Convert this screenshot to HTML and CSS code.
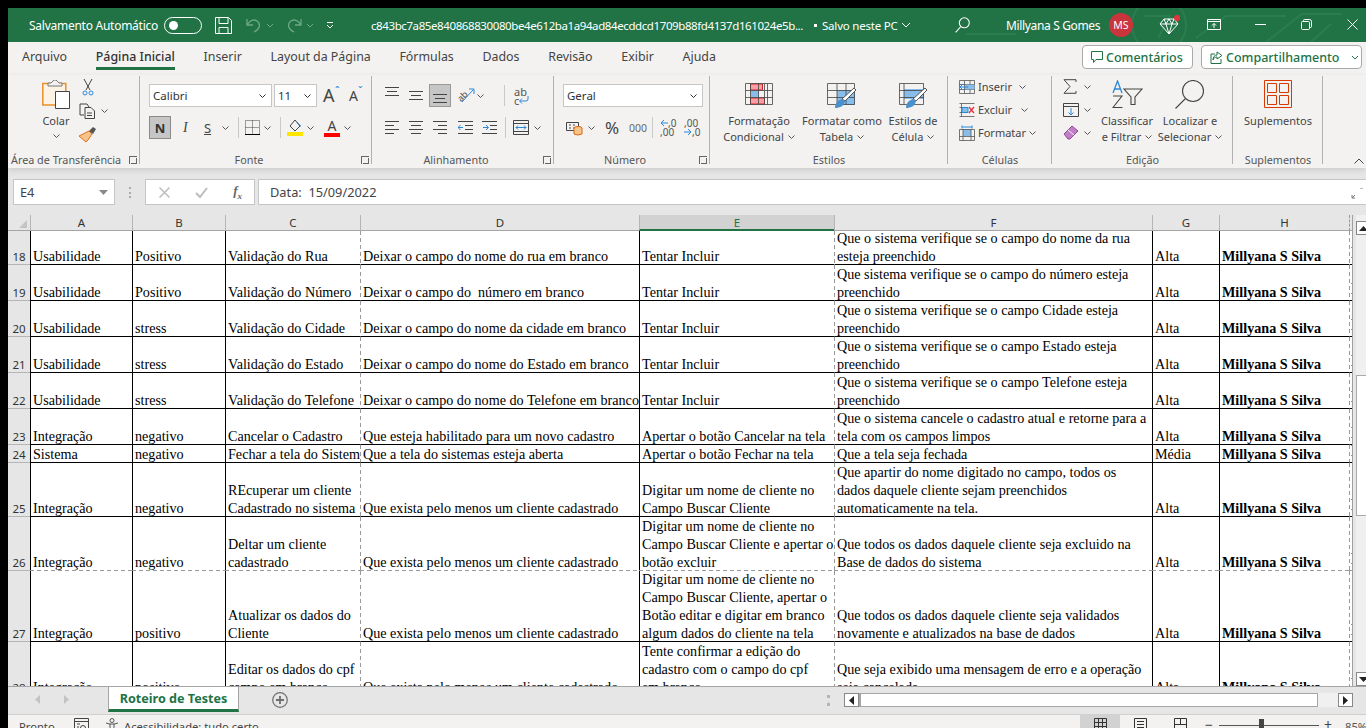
FILE: index.html
```html
<!DOCTYPE html>
<html lang="pt-BR">
<head>
<meta charset="utf-8">
<title>Roteiro de Testes</title>
<link rel="stylesheet" href="styles.css">
</head>
<body>
<div class="app">
  <header class="titlebar">
    <svg class="circuit" width="400" height="34" viewBox="0 0 400 34" fill="none" stroke="#2c7c51" stroke-width="2"><circle cx="193" cy="17" r="27"/><path d="M178 8h26l-12 22M60 20h60l10-8M0 26h50M230 30l30-22h60M300 34l36-28h40M345 34l20-18"/></svg>
    <span class="tt-auto">Salvamento Automático</span>
    <span class="toggle"><i></i></span>
    <svg class="tt-save" width="17" height="17" viewBox="0 0 17 17" fill="none" stroke="#fff"><path d="M.5.5h13l3 3v13H.5zM4 .5v6h9v-6M4 16.5v-6h9v6"/></svg>
    <svg class="tt-undo" width="16" height="16" viewBox="0 0 16 16" fill="none" stroke="#6ba888" stroke-width="1.3"><path d="M1 2v6h6M1 8c3-5 7-6 10-4 4 3 3 8-3 11"/></svg>
    <svg class="chev-dim" width="8" height="5" viewBox="0 0 8 5" fill="none" stroke="#6ba888"><path d="M1 1l3 3 3-3"/></svg>
    <svg class="tt-redo" width="16" height="16" viewBox="0 0 16 16" fill="none" stroke="#6ba888" stroke-width="1.3"><path d="M15 2v6H9M15 8C12 3 8 2 5 4c-4 3-3 8 3 11"/></svg>
    <svg class="chev-dim" width="8" height="5" viewBox="0 0 8 5" fill="none" stroke="#6ba888"><path d="M1 1l3 3 3-3"/></svg>
    <svg class="tt-cust" width="8" height="7" viewBox="0 0 8 7" fill="none" stroke="#fff"><path d="M1 .5h6M1 3l3 3 3-3"/></svg>
    <span class="tt-file">c843bc7a85e840868830080be4e612ba1a94ad84ecddcd1709b88fd4137d161024e5b...</span>
    <span class="tt-dot"></span>
    <span class="tt-saved">Salvo neste PC</span>
    <svg class="tt-chev" width="10" height="6" viewBox="0 0 10 6" fill="none" stroke="#fff"><path d="M1 1l4 4 4-4"/></svg>
    <svg class="tt-search" width="15" height="16" viewBox="0 0 15 16" fill="none" stroke="#fff" stroke-width="1.1"><circle cx="9.3" cy="5.8" r="5"/><path d="M5.8 9.5L.7 15.3"/></svg>
    <span class="tt-user">Millyana S Gomes</span>
    <span class="avatar">MS</span>
    <svg class="tt-gem" width="22" height="20" viewBox="0 0 22 20" fill="none"><path d="M5 4h10l4 5-9 10L1 9zM1 9h18M7 9l3 10 3-10-3-5zM5 4l2 5M15 4l-2 5" stroke="#fff"/><circle cx="18" cy="3" r="3" fill="#e3343e"/></svg>
    <svg class="tt-disp" width="14" height="11" viewBox="0 0 14 11" fill="none" stroke="#fff"><path d="M.5.5h13v10H.5zM.5 2.5h13M7 9V4.5M5 6.5l2-2 2 2"/></svg>
    <svg class="tt-min" width="11" height="1" viewBox="0 0 11 1"><path d="M0 .5h11" stroke="#fff"/></svg>
    <svg class="tt-max" width="11" height="11" viewBox="0 0 11 11" fill="none" stroke="#fff"><rect x=".5" y="2.5" width="8" height="8" rx="1"/><path d="M2.5 2.5V1.5q0-1 1-1h5q2 0 2 2v5q0 1-1 1h-1"/></svg>
    <svg class="tt-close" width="11" height="11" viewBox="0 0 11 11" fill="none" stroke="#fff"><path d="M.5.5l10 10M10.500.5l-10 10"/></svg>
  </header>

  <nav class="tabs">
    <span class="tab">Arquivo</span>
    <span class="tab on">Página Inicial</span>
    <span class="tab">Inserir</span>
    <span class="tab">Layout da Página</span>
    <span class="tab">Fórmulas</span>
    <span class="tab">Dados</span>
    <span class="tab">Revisão</span>
    <span class="tab">Exibir</span>
    <span class="tab">Ajuda</span>
    <span class="grow"></span>
    <button class="pill pill-c"><svg width="12" height="13" viewBox="0 0 12 13" fill="none" stroke="#217346"><path d="M.5.5h11v8H5L2.5 11.5v-3h-2z"/></svg>Comentários</button>
    <button class="pill pill-s"><svg width="13" height="13" viewBox="0 0 13 13" fill="none" stroke="#217346"><path d="M5 3H1v9.500h10V8M7 1l5 3.500L7 8V6C5 6 3.500 7 3 9c0-3 1.500-5 4-5z"/></svg>Compartilhamento<svg class="pill-chev" width="8" height="5" viewBox="0 0 8 5" fill="none" stroke="#217346"><path d="M1 1l3 3 3-3"/></svg></button>
  </nav>

  <section class="ribbon">
    <div class="grp g-clip">
      <div class="gbody">
        <div class="paste">
          <svg width="28" height="31" viewBox="0 0 28 31" fill="none"><path d="M.8 3.500h23V25H.8z" fill="#fdf3e4" stroke="#e8912d" stroke-width="1.500"/><path d="M6 3h3l3-3h2l3 3h3v3H6z" fill="#f3f2f1" stroke="#777"/><path d="M13.500 11.500h14v17h-14z" fill="#fff" stroke="#444"/></svg>
          <span>Colar</span>
          <svg class="chev" width="7" height="4" viewBox="0 0 7 4" fill="none" stroke="#555"><path d="M.5.5l3 3 3-3"/></svg>
        </div>
        <div class="clip-side">
          <svg class="ic-scis" width="12" height="17" viewBox="0 0 12 17" fill="none" stroke="#444"><path d="M2 0l6 11M10 0L4 11"/><circle cx="3" cy="14" r="2" stroke="#2b88d8"/><circle cx="9" cy="14" r="2" stroke="#2b88d8"/></svg>
          <div class="rowi"><svg width="17" height="16" viewBox="0 0 17 16" fill="none" stroke="#444"><path d="M5 12H1V1h7l2 3M6 4.500h6l3.500 3.500v7.500H6zM8 10h5M8 12.500h5"/></svg><svg class="chev" width="7" height="4" viewBox="0 0 7 4" fill="none" stroke="#555"><path d="M.5.5l3 3 3-3"/></svg></div>
          <svg class="ic-paint" width="17" height="16" viewBox="0 0 17 16"><path d="M10 4l3 3-4 6-2 2-7-6 2-1z" fill="#f6c38a" stroke="#e0701a"/><path d="M10 4l4-4 3 2-3 5z" fill="#555"/></svg>
        </div>
      </div>
      <div class="glabel">Área de Transferência<i class="launch"></i></div>
    </div>

    <div class="grp g-font">
      <div class="gbody col">
        <div class="row r1">
          <span class="combo c-font">Calibri<svg width="7" height="4" viewBox="0 0 7 4" fill="none" stroke="#333"><path d="M.5.500l3 3 3-3"/></svg></span>
          <span class="combo c-size">11<svg width="7" height="4" viewBox="0 0 7 4" fill="none" stroke="#333"><path d="M.5.500l3 3 3-3"/></svg></span>
          <span class="bigA">A<sup>ˆ</sup></span>
          <span class="smallA">A<sup>ˇ</sup></span>
        </div>
        <div class="row r2">
          <span class="fbtn sel">N</span>
          <span class="fi">I</span>
          <span class="fs">S</span>
          <svg class="chev" width="7" height="4" viewBox="0 0 7 4" fill="none" stroke="#555"><path d="M.5.5l3 3 3-3"/></svg>
          <i class="vsep"></i>
          <svg class="ic-border" width="15" height="15" viewBox="0 0 15 15" fill="none" stroke="#444" stroke-dasharray="1 1"><path d="M.5.500h14v14H.500zM7.500.500v14M.5 7.500h14"/><path d="M0 14.500h15" stroke-dasharray="none" stroke="#000"/></svg>
          <svg class="chev" width="7" height="4" viewBox="0 0 7 4" fill="none" stroke="#555"><path d="M.5.5l3 3 3-3"/></svg>
          <i class="vsep"></i>
          <svg width="16" height="16" viewBox="0 0 16 16"><path d="M8 0l5 6-5 5-5-5z" fill="none" stroke="#444"/><path d="M9 1l5 5-1 1z" fill="#1f6fb5"/><rect y="12" width="16" height="4" fill="#ffe600"/></svg>
          <svg class="chev" width="7" height="4" viewBox="0 0 7 4" fill="none" stroke="#555"><path d="M.5.5l3 3 3-3"/></svg>
          <span class="colorA">A</span>
          <svg class="chev" width="7" height="4" viewBox="0 0 7 4" fill="none" stroke="#555"><path d="M.5.5l3 3 3-3"/></svg>
        </div>
      </div>
      <div class="glabel">Fonte<i class="launch"></i></div>
    </div>

    <div class="grp g-align">
      <div class="gbody col">
        <div class="row ra1">
          <svg class="al al-t" width="14" height="10" viewBox="0 0 14 10" stroke="#444"><path d="M0 .5h14M2 4.500h10M0 8.500h14"/></svg>
          <svg class="al" width="14" height="10" viewBox="0 0 14 10" stroke="#444"><path d="M0 .5h14M2 4.500h10M0 8.500h14"/></svg>
          <span class="alsel"><svg width="14" height="10" viewBox="0 0 14 10" stroke="#444"><path d="M0 .5h14M2 4.500h10M0 8.500h14"/></svg></span>
          <svg class="orient" width="18" height="17" viewBox="0 0 18 17" fill="none"><text x="0" y="12" font-size="9" fill="#444" font-family="Noto Sans" transform="rotate(-45 6 9)">ab</text><path d="M5 15L16 3M12 2h5v5" stroke="#2b88d8"/></svg>
          <svg class="chev" width="7" height="4" viewBox="0 0 7 4" fill="none" stroke="#555"><path d="M.5.5l3 3 3-3"/></svg>
          <i class="vsep s2"></i>
          <span class="wrap"><b>ab</b><b>c<svg width="10" height="8" viewBox="0 0 10 8" fill="none" stroke="#2b88d8"><path d="M9 0v3q0 2-2 2H1M3 2.500L.5 5 3 7.500"/></svg></b></span>
        </div>
        <div class="row ra2">
          <svg class="al" width="14" height="13" viewBox="0 0 14 13" stroke="#444"><path d="M0 .5h14M0 4.500h9M0 8.500h14M0 12.500h9"/></svg>
          <svg class="al" width="14" height="13" viewBox="0 0 14 13" stroke="#444"><path d="M0 .5h14M2 4.500h10M0 8.500h14M2 12.500h10"/></svg>
          <svg class="al" width="14" height="13" viewBox="0 0 14 13" stroke="#444"><path d="M0 .5h14M5 4.500h9M0 8.500h14M5 12.500h9"/></svg>
          <svg class="ind" width="15" height="13" viewBox="0 0 15 13" fill="none"><path d="M0 .5h15M7 4.500h8M7 8.500h8M0 12.500h15" stroke="#444"/><path d="M5 6.500H0M2.500 4L0 6.500 2.500 9" stroke="#2b88d8"/></svg>
          <svg class="ind" width="15" height="13" viewBox="0 0 15 13" fill="none"><path d="M0 .5h15M8 4.500h7M8 8.500h7M0 12.500h15" stroke="#444"/><path d="M1 6.500h5M4 4l2.500 2.500L4 9" stroke="#2b88d8"/></svg>
          <i class="vsep s3"></i>
          <svg width="16" height="15" viewBox="0 0 16 15" fill="none"><path d="M.5.500h15v14H.500zM.5 3.500h15M.5 11.500h15" stroke="#444"/><path d="M3 7.500h10M5 5.500l-2 2 2 2M11 5.500l2 2-2 2" stroke="#2b88d8"/></svg>
          <svg class="chev" width="7" height="4" viewBox="0 0 7 4" fill="none" stroke="#555"><path d="M.5.5l3 3 3-3"/></svg>
        </div>
      </div>
      <div class="glabel">Alinhamento<i class="launch"></i></div>
    </div>

    <div class="grp g-num">
      <div class="gbody col">
        <div class="row r1">
          <span class="combo c-num">Geral<svg width="7" height="4" viewBox="0 0 7 4" fill="none" stroke="#333"><path d="M.5.500l3 3 3-3"/></svg></span>
        </div>
        <div class="row rn2">
          <svg width="17" height="16" viewBox="0 0 17 16" fill="none"><path d="M.5 2.500h12v8H.5z" stroke="#444"/><path d="M3 5h2M3 8h2M7 5h2M7 8h2" stroke="#444"/><ellipse cx="12" cy="8" rx="4" ry="1.500" fill="#f6c38a" stroke="#d9660f"/><path d="M8 8v6q4 2 8 0V8" fill="#f6c38a" stroke="#d9660f"/></svg>
          <svg class="chev" width="7" height="4" viewBox="0 0 7 4" fill="none" stroke="#555"><path d="M.5.5l3 3 3-3"/></svg>
          <span class="pct">%</span>
          <span class="kilo">000</span>
          <i class="vsep s4"></i>
          <span class="dec"><svg width="8" height="8" viewBox="0 0 8 8" fill="none" stroke="#2b88d8"><path d="M8 4H1M4 1L1 4l3 3"/></svg><em>,0</em><br><em>,00</em></span>
          <span class="dec d2"><em>,00</em><br><svg width="8" height="8" viewBox="0 0 8 8" fill="none" stroke="#2b88d8"><path d="M0 4h7M4 1l3 3-3 3"/></svg><em>,0</em></span>
        </div>
      </div>
      <div class="glabel">Número<i class="launch"></i></div>
    </div>

    <div class="grp g-styles">
      <div class="gbody">
        <div class="big b-cond">
          <svg class="t8" width="28" height="22" viewBox="0 0 28 22" fill="none"><path d="M5.500 1h12v6h-12zM5.500 15h14v6h-14z" fill="#fa9ea3" stroke="#d3232a"/><path d="M5.500 8h8v6h-8z" fill="#87bde8"/><path d="M.5.500h27v21H.500zM.5 7.500h27M.5 14.500h27M5.500.5v21M13.500.500v21M19.500.500v21M22.500.500v21" stroke="#444" stroke-width=".8"/></svg>
          <span>Formatação<br>Condicional<svg class="chev" width="7" height="4" viewBox="0 0 7 4" fill="none" stroke="#555"><path d="M.5.5l3 3 3-3"/></svg></span>
        </div>
        <div class="big b-table">
          <svg class="t8" width="30" height="26" viewBox="0 0 30 26" fill="none"><path d="M10 7h18v15H10z" fill="#87bde8"/><path d="M.5.500h27v21H.500zM.5 7.500h27M.5 14.500h27M10 .5v21M19 .500v21" stroke="#444" stroke-width=".8"/><path d="M29 7L18 18l-3-2L27 5z" fill="#fff" stroke="#555"/><path d="M8 25c0-5 3-8 7-9l3 2c-1 5-5 7-10 7z" fill="#4a90cc"/></svg>
          <span>Formatar como<br>Tabela<svg class="chev" width="7" height="4" viewBox="0 0 7 4" fill="none" stroke="#555"><path d="M.5.5l3 3 3-3"/></svg></span>
        </div>
        <div class="big b-cell">
          <svg class="t8" width="29" height="26" viewBox="0 0 29 26" fill="none"><path d="M5 6h20v10H5z" fill="#87bde8"/><path d="M.5.500h24v21H.500zM.5 7.500h24M.5 14.500h24M5 .5v21" stroke="#444" stroke-width=".8"/><path d="M28 7L17 18l-3-2L26 5z" fill="#fff" stroke="#555"/><path d="M7 25c0-5 3-8 7-9l3 2c-1 5-5 7-10 7z" fill="#4a90cc"/></svg>
          <span>Estilos de<br>Célula<svg class="chev" width="7" height="4" viewBox="0 0 7 4" fill="none" stroke="#555"><path d="M.5.5l3 3 3-3"/></svg></span>
        </div>
      </div>
      <div class="glabel">Estilos</div>
    </div>

    <div class="grp g-cells">
      <div class="gbody col">
        <div class="cellrow"><svg width="16" height="14" viewBox="0 0 16 14" fill="none"><path d="M.5.500h15v13H.500zM.5 4.500h15M.5 9.500h15M5.500.500v13M11 .500v13" stroke="#555" stroke-width=".8"/><path d="M6 4.500h9.500v5H6z" fill="#87bde8"/><path d="M9 7H1M4 4L1 7l3 3" stroke="#2b88d8"/></svg><span>Inserir</span><svg class="chev c1" width="7" height="4" viewBox="0 0 7 4" fill="none" stroke="#555"><path d="M.5.5l3 3 3-3"/></svg></div>
        <div class="cellrow"><svg width="16" height="14" viewBox="0 0 16 14" fill="none"><path d="M.5.500h15M.5 13.500h15M2.500.5v13M.5 4.500h3M.5 9.500h3" stroke="#555" stroke-width=".8"/><path d="M3 4.500h6v5H3z" fill="#87bde8" stroke="#2b88d8"/><path d="M10 4l5 6M15 4l-5 6" stroke="#e3343e" stroke-width="1.300"/></svg><span>Excluir</span><svg class="chev c2" width="7" height="4" viewBox="0 0 7 4" fill="none" stroke="#555"><path d="M.5.5l3 3 3-3"/></svg></div>
        <div class="cellrow"><svg width="16" height="16" viewBox="0 0 16 16" fill="none"><path d="M4 4h8v7H4z" fill="#87bde8"/><path d="M.5 4.500h15v11H.500zM.5 11.500h15M4 4.500v11M12 4.500v11" stroke="#555" stroke-width=".8"/><path d="M3 .5v3M13 .5v3M3 2h10" stroke="#2b88d8"/></svg><span>Formatar</span><svg class="chev c3" width="7" height="4" viewBox="0 0 7 4" fill="none" stroke="#555"><path d="M.5.5l3 3 3-3"/></svg></div>
      </div>
      <div class="glabel">Células</div>
    </div>

    <div class="grp g-edit">
      <div class="gbody">
        <div class="edcol">
          <div class="edrow"><svg width="14" height="15" viewBox="0 0 14 15" fill="none" stroke="#444"><path d="M13 3V.7H1l6 6.800-6 6.800h12V12"/></svg><svg class="chev" width="7" height="4" viewBox="0 0 7 4" fill="none" stroke="#555"><path d="M.5.5l3 3 3-3"/></svg></div>
          <div class="edrow"><svg width="16" height="14" viewBox="0 0 16 14" fill="none"><path d="M.5.500h15v13H.500zM.5 3.500h15" stroke="#444"/><path d="M8 5v7M5.500 9.500L8 12l2.500-2.500" stroke="#2b88d8"/></svg><svg class="chev" width="7" height="4" viewBox="0 0 7 4" fill="none" stroke="#555"><path d="M.5.5l3 3 3-3"/></svg></div>
          <div class="edrow"><svg width="16" height="15" viewBox="0 0 16 15"><path d="M1 9l8-8 6 5-8 8H5z" fill="#c27dc7" stroke="#93489a"/><path d="M5 5l6 5" stroke="#f3f2f1"/></svg><svg class="chev" width="7" height="4" viewBox="0 0 7 4" fill="none" stroke="#555"><path d="M.5.5l3 3 3-3"/></svg></div>
        </div>
        <div class="big b-sort">
          <svg class="t5" width="31" height="29" viewBox="0 0 31 29" fill="none"><path d="M1 13L5.500 1 10 13M2.500 9h6" stroke="#2b88d8" stroke-width="1.300"/><path d="M1 16h9L1 27.500h9.500" stroke="#444" stroke-width="1.100"/><path d="M12 9h18l-7 8v7.500h-4V17z" stroke="#444" stroke-width="1.100"/></svg>
          <span>Classificar<br>e Filtrar<svg class="chev" width="7" height="4" viewBox="0 0 7 4" fill="none" stroke="#555"><path d="M.5.5l3 3 3-3"/></svg></span>
        </div>
        <div class="big b-find">
          <svg class="t5" width="30" height="29" viewBox="0 0 30 29" fill="none" stroke="#444" stroke-width="1.100"><circle cx="18" cy="11" r="10.500"/><path d="M10.500 18.500L.5 28.500"/></svg>
          <span>Localizar e<br>Selecionar<svg class="chev" width="7" height="4" viewBox="0 0 7 4" fill="none" stroke="#555"><path d="M.5.5l3 3 3-3"/></svg></span>
        </div>
      </div>
      <div class="glabel">Edição</div>
    </div>

    <div class="grp g-addin">
      <div class="gbody">
        <div class="big b-add">
          <svg class="t5" width="28" height="28" viewBox="0 0 28 28" fill="none" stroke="#d83b01"><path d="M.5.500h27v27H.500zM3.500 3.500h9v9h-9zM15.500 3.500h9v9h-9zM3.500 15.500h9v9h-9zM15.500 15.500h9v9h-9z"/></svg>
          <span>Suplementos</span>
        </div>
      </div>
      <div class="glabel">Suplementos</div>
    </div>
    <svg class="collapse" width="10" height="6" viewBox="0 0 10 6" fill="none" stroke="#444"><path d="M.5 5.500L5 1l4.500 4.500"/></svg>
  </section>

  <div class="fxbar">
    <div class="namebox">E4<svg width="9" height="5" viewBox="0 0 9 5"><path d="M0 0h9L4.500 5z" fill="#8a8a8a"/></svg></div>
    <span class="fxdots"></span>
    <div class="fxbtns">
      <svg width="11" height="11" viewBox="0 0 11 11" stroke="#bdbdbd" stroke-width="1.500"><path d="M.5.500l10 10M10.500.500l-10 10"/></svg>
      <svg width="13" height="11" viewBox="0 0 13 11" fill="none" stroke="#bdbdbd" stroke-width="2"><path d="M1 6l4 4 7-9"/></svg>
      <span class="fx">f<sub>x</sub></span>
    </div>
    <div class="fxinput">Data:&nbsp; 15/09/2022<svg class="fxexp" width="12" height="11" viewBox="0 0 12 11" fill="none" stroke="#777"><path d="M1 10l3-3M1 7v3h3"/><path d="M9 0h2v2" stroke-dasharray="1 1"/></svg></div>
  </div>

  <div class="sheet">
    <div class="gridwrap">
      <div class="grid">
        <div class="hd corner"><i></i></div><div class="hd">A</div><div class="hd">B</div><div class="hd">C</div><div class="hd">D</div><div class="hd cur">E</div><div class="hd">F</div><div class="hd">G</div><div class="hd">H</div><div class="hd sl"></div>

        <div class="rh"><span>18</span></div><div class="c"><span>Usabilidade</span></div><div class="c"><span>Positivo</span></div><div class="c"><span>Validação do Rua</span></div><div class="c da"><span>Deixar o campo do nome do rua em branco</span></div><div class="c"><span>Tentar Incluir</span></div><div class="c da"><span>Que o sistema verifique se o campo do nome da rua esteja preenchido</span></div><div class="c"><span>Alta</span></div><div class="c nm"><span>Millyana S Silva</span></div><div class="c sl"></div>

        <div class="rh"><span>19</span></div><div class="c"><span>Usabilidade</span></div><div class="c"><span>Positivo</span></div><div class="c"><span>Validação do Número</span></div><div class="c da"><span>Deixar o campo do&nbsp; número em branco</span></div><div class="c"><span>Tentar Incluir</span></div><div class="c da"><span>Que sistema verifique se o campo do número esteja preenchido</span></div><div class="c"><span>Alta</span></div><div class="c nm"><span>Millyana S Silva</span></div><div class="c sl"></div>

        <div class="rh"><span>20</span></div><div class="c"><span>Usabilidade</span></div><div class="c"><span>stress</span></div><div class="c"><span>Validação do Cidade</span></div><div class="c da"><span>Deixar o campo do nome da cidade em branco</span></div><div class="c"><span>Tentar Incluir</span></div><div class="c da"><span>Que o sistema verifique se o campo Cidade esteja preenchido</span></div><div class="c"><span>Alta</span></div><div class="c nm"><span>Millyana S Silva</span></div><div class="c sl"></div>

        <div class="rh"><span>21</span></div><div class="c"><span>Usabilidade</span></div><div class="c"><span>stress</span></div><div class="c"><span>Validação do Estado</span></div><div class="c da"><span>Deixar o campo do nome do Estado em branco</span></div><div class="c"><span>Tentar Incluir</span></div><div class="c da"><span>Que o sistema verifique se o campo Estado esteja preenchido</span></div><div class="c"><span>Alta</span></div><div class="c nm"><span>Millyana S Silva</span></div><div class="c sl"></div>

        <div class="rh"><span>22</span></div><div class="c"><span>Usabilidade</span></div><div class="c"><span>stress</span></div><div class="c"><span>Validação do Telefone</span></div><div class="c da clip"><span>Deixar o campo do nome do Telefone em branco</span></div><div class="c"><span>Tentar Incluir</span></div><div class="c da"><span>Que o sistema verifique se o campo Telefone esteja preenchido</span></div><div class="c"><span>Alta</span></div><div class="c nm"><span>Millyana S Silva</span></div><div class="c sl"></div>

        <div class="rh"><span>23</span></div><div class="c"><span>Integração</span></div><div class="c"><span>negativo</span></div><div class="c"><span>Cancelar o Cadastro</span></div><div class="c da"><span>Que esteja habilitado para um novo cadastro</span></div><div class="c"><span>Apertar o botão Cancelar na tela</span></div><div class="c da"><span>Que o sistema cancele o cadastro atual e retorne para a tela com os campos limpos</span></div><div class="c"><span>Alta</span></div><div class="c nm"><span>Millyana S Silva</span></div><div class="c sl"></div>

        <div class="rh"><span>24</span></div><div class="c"><span>Sistema</span></div><div class="c"><span>negativo</span></div><div class="c clip"><span>Fechar a tela do Sistema</span></div><div class="c da"><span>Que a tela do sistemas esteja aberta</span></div><div class="c"><span>Apertar o botão Fechar na tela</span></div><div class="c da"><span>Que a tela seja fechada</span></div><div class="c"><span>Média</span></div><div class="c nm"><span>Millyana S Silva</span></div><div class="c sl"></div>

        <div class="rh"><span>25</span></div><div class="c"><span>Integração</span></div><div class="c"><span>negativo</span></div><div class="c"><span>REcuperar um cliente Cadastrado no sistema</span></div><div class="c da"><span>Que exista pelo menos um cliente cadastrado</span></div><div class="c"><span>Digitar um nome de cliente no Campo Buscar Cliente</span></div><div class="c da"><span>Que apartir do nome digitado no campo, todos os dados daquele cliente sejam preenchidos automaticamente na tela.</span></div><div class="c"><span>Alta</span></div><div class="c nm"><span>Millyana S Silva</span></div><div class="c sl"></div>

        <div class="rh"><span>26</span></div><div class="c brk"><span>Integração</span></div><div class="c brk"><span>negativo</span></div><div class="c brk"><span>Deltar um cliente cadastrado</span></div><div class="c da brk"><span>Que exista pelo menos um cliente cadastrado</span></div><div class="c brk"><span>Digitar um nome de cliente no Campo Buscar Cliente e apertar o botão excluir</span></div><div class="c da brk"><span>Que todos os dados daquele cliente seja excluido na Base de dados do sistema</span></div><div class="c brk"><span>Alta</span></div><div class="c nm brk"><span>Millyana S Silva</span></div><div class="c sl brk"></div>

        <div class="rh"><span>27</span></div><div class="c"><span>Integração</span></div><div class="c"><span>positivo</span></div><div class="c"><span>Atualizar os dados do Cliente</span></div><div class="c da"><span>Que exista pelo menos um cliente cadastrado</span></div><div class="c"><span>Digitar um nome de cliente no Campo Buscar Cliente, apertar o Botão editar e digitar em branco algum dados do cliente na tela</span></div><div class="c da"><span>Que todos os dados daquele cliente seja validados novamente e atualizados na base de dados</span></div><div class="c"><span>Alta</span></div><div class="c nm"><span>Millyana S Silva</span></div><div class="c sl"></div>

        <div class="rh"><span>28</span></div><div class="c"><span>Integração</span></div><div class="c"><span>positivo</span></div><div class="c"><span>Editar os dados do cpf campo em branco</span></div><div class="c da"><span>Que exista pelo menos um cliente cadastrado</span></div><div class="c"><span>Tente confirmar a edição do cadastro com o campo do cpf<br>em branco</span></div><div class="c da"><span>Que seja exibido uma mensagem de erro e a operação seja cancelada</span></div><div class="c"><span>Alta</span></div><div class="c nm"><span>Millyana S Silva</span></div><div class="c sl"></div>
      </div>
    </div>
    <div class="vscroll">
      <span class="sbtn"><svg width="9" height="5" viewBox="0 0 9 5"><path d="M4.500 0L9 5H0z" fill="#222"/></svg></span>
      <span class="vthumb"></span>
      <span class="grow"></span>
      <span class="sbtn"><svg width="9" height="5" viewBox="0 0 9 5"><path d="M0 0h9L4.500 5z" fill="#222"/></svg></span>
    </div>
  </div>

  <div class="sheetbar">
    <div class="navarrows">
      <svg width="5" height="9" viewBox="0 0 5 9"><path d="M5 0v9L0 4.500z" fill="#c3c3c3"/></svg>
      <svg width="5" height="9" viewBox="0 0 5 9"><path d="M0 0v9l5-4.500z" fill="#c3c3c3"/></svg>
    </div>
    <span class="stab">Roteiro de Testes</span>
    <svg class="addsheet" width="16" height="16" viewBox="0 0 16 16" fill="none" stroke="#6e6e6e"><circle cx="8" cy="8" r="7.300" stroke-width="1.200"/><path d="M4 8h8M8 4v8" stroke-width="1.800"/></svg>
    <span class="grow"></span>
    <span class="tabdots"></span>
    <div class="hscroll">
      <span class="sbtn hb"><svg width="5" height="9" viewBox="0 0 5 9"><path d="M5 0v9L0 4.500z" fill="#222"/></svg></span>
      <span class="hthumb"></span>
      <span class="grow"></span>
      <span class="sbtn hb"><svg width="5" height="9" viewBox="0 0 5 9"><path d="M0 0v9l5-4.500z" fill="#222"/></svg></span>
    </div>
  </div>

  <footer class="status">
    <span class="st-ready">Pronto</span>
    <svg class="st-macro" width="15" height="15" viewBox="0 0 15 15" fill="none" stroke="#444"><path d="M.5.500h14v14H.500zM.5 3.500h14"/><circle cx="9" cy="10" r="2.500"/><path d="M3 6h3M3 9h2M3 12h2"/></svg>
    <svg class="st-acc" width="16" height="15" viewBox="0 0 16 15" fill="none" stroke="#555"><circle cx="7" cy="2.500" r="2"/><path d="M1 5l4 1h4l4-1M5 6v4l-2 4M9 6v4l2 4"/></svg>
    <span class="st-acct">Acessibilidade: tudo certo</span>
    <span class="grow"></span>
    <span class="view on"><svg width="13" height="13" viewBox="0 0 13 13" fill="none" stroke="#333"><path d="M.5.500h12v12H.500zM.5 4.500h12M.5 8.500h12M4.500.500v12M8.500.500v12"/></svg></span>
    <span class="view"><svg width="13" height="13" viewBox="0 0 13 13" fill="none" stroke="#333"><path d="M.5.500h12v12H.500zM3 3.500h7M3 6.500h7M3 9.500h7"/></svg></span>
    <span class="view"><svg width="13" height="13" viewBox="0 0 13 13" fill="none" stroke="#333"><path d="M.5.500h12v12H.500zM6.500.500v6M.5 6.500h12"/></svg></span>
    <span class="zm">−</span>
    <span class="slider"><i></i></span>
    <span class="zm">+</span>
    <span class="st-pct">85%</span>
  </footer>
</div>
</body>
</html>
```

FILE: styles.css
```css
* { box-sizing: border-box; }
html, body { margin: 0; height: 100%; overflow: hidden; background: #000; }
body { padding: 8px 0 0 8px; }
svg { display: block; flex: none; }
.grow { flex: 1; }
.app {
  width: 1358px; height: 720px; overflow: hidden; display: flex; flex-direction: column;
  background: #e6e6e6; font-family: "Noto Sans", "Open Sans", sans-serif; color: #444;
}

/* title bar */
.titlebar {
  position: relative; height: 34px; flex: none; background: #217346; color: #fff;
  display: flex; align-items: center; font-size: 12px; overflow: hidden;
}
.circuit { position: absolute; left: 958px; top: 0; }
.titlebar > *:not(.circuit) { position: relative; }
.tt-auto { margin-left: 21px; width: 135px; white-space: nowrap; letter-spacing: -.26px; }
.toggle { width: 38px; height: 17px; border: 1px solid #fff; border-radius: 9px; display: flex; align-items: center; padding-left: 4px; }
.toggle i { width: 9px; height: 9px; border-radius: 50%; background: #fff; }
.tt-save { margin-left: 13px; }
.tt-undo { margin-left: 14px; }
.chev-dim { margin-left: 4px; }
.tt-redo { margin-left: 12px; }
.tt-cust { margin-left: 12px; }
.tt-file { margin-left: 37px; width: 435px; white-space: nowrap; font-size: 11.5px; letter-spacing: -.4px; }
.tt-dot { width: 3px; height: 3px; background: #fff; margin-left: 8px; }
.tt-saved { margin-left: 5px; width: 78px; white-space: nowrap; font-size: 11.5px; letter-spacing: -.2px; }
.tt-chev { margin-left: 1px; }
.tt-search { margin-left: 44px; }
.tt-user { margin-left: 36px; width: 96px; white-space: nowrap; letter-spacing: -.35px; }
.avatar { width: 24px; height: 24px; margin-left: 7px; border-radius: 50%; background: #c9343d; font-size: 10.5px; display: flex; align-items: center; justify-content: center; }
.tt-gem { margin-left: 26px; }
.tt-disp { margin-left: 26px; top: -1px; }
.tt-min { margin-left: 34px; top: -1px; }
.tt-max { margin-left: 35px; top: -1px; }
.tt-close { margin-left: 35px; top: -1px; }

/* tab row */
.tabs { height: 33px; flex: none; background: #f3f2f1; display: flex; align-items: center; padding-left: 14px; font-size: 12.4px; }
.tab { margin-right: 28.7px; height: 33px; padding-top: 6px; white-space: nowrap; color: #444; }
.tab.on { font-weight: 500; color: #333; position: relative; }
.tab.on::after { content: ""; position: absolute; left: 0; right: 0; top: 25px; height: 3px; background: #217346; }
.pill {
  height: 24px; background: #fff; border: 1px solid #a9a9a9; border-radius: 4px; color: #217346;
  font: 500 12.5px "Noto Sans", sans-serif; display: flex; align-items: center; gap: 3px; padding: 0 0 0 8px; margin-bottom: 3px;
}
.pill-c { width: 111px; margin-right: 8px; }
.pill-s { width: 161px; margin-right: 4px; }
.pill-chev { margin-left: 9px; }

/* ribbon */
.ribbon { position: relative; height: 93px; flex: none; background: #f3f2f1; display: flex; font-size: 11px; color: #444; box-shadow: 0 2px 6px rgba(0,0,0,.12); z-index: 2; }
.grp { position: relative; display: flex; flex-direction: column; height: 93px; }
.grp::after { content: ""; position: absolute; right: 0; top: 1px; bottom: 4px; width: 1px; background: #b1b1b1; }
.gbody { flex: 1; display: flex; min-height: 0; }
.gbody.col { flex-direction: column; }
.glabel { height: 16px; line-height: 16px; text-align: center; white-space: nowrap; font-size: 10.8px; color: #555; flex: none; }
.g-font .glabel, .g-align .glabel, .g-num .glabel { padding-right: 14px; }
.launch { position: absolute; right: 3px; bottom: 4px; width: 8px; height: 8px; border: 1px solid #666; border-width: 1px 0 0 1px; z-index: 1; }
.launch::after { content: ""; position: absolute; right: 0; bottom: 0; width: 5px; height: 5px; border: 1px solid #666; border-width: 0 1px 1px 0; }
.row { display: flex; align-items: center; }

.g-clip { width: 132px; }
.g-clip .glabel { text-align: left; padding-left: 3px; }
.paste { width: 44px; display: flex; flex-direction: column; align-items: center; padding-top: 5px; margin-left: 26px; line-height: 16px; }
.paste span { margin-top: 2px; }
.paste .chev { margin-top: 5px; }
.clip-side { margin-left: 1px; padding-top: 4px; display: flex; flex-direction: column; }
.ic-scis { margin-left: 3px; }
.rowi { display: flex; align-items: center; gap: 5px; margin-top: 7px; }
.ic-paint { margin-top: 8px; }

.g-font { width: 232px; }
.g-font .gbody { padding-left: 9px; }
.r1 { margin-top: 9px; height: 23px; }
.combo { height: 23px; background: #fff; border: 1px solid #c6c6c6; display: flex; align-items: center; justify-content: space-between; padding: 0 5px 0 3px; font-size: 11.5px; color: #333; }
.c-font { width: 123px; }
.c-size { width: 43px; margin-left: 2px; }
.bigA { font-size: 18px; line-height: 23px; margin-left: 6px; width: 26px; position: relative; }
.smallA { font-size: 14px; line-height: 23px; width: 16px; position: relative; }
.bigA sup, .smallA sup { position: absolute; top: 0; left: 12px; font-size: 11px; color: #2b88d8; line-height: 14px; }
.smallA sup { left: 9px; }
.r2 { margin-top: 9px; height: 23px; }
.fbtn { width: 22px; height: 23px; border: 1px solid #8a8a8a; background: #c6c6c6; font-weight: 700; font-size: 13px; display: flex; align-items: center; justify-content: center; color: #333; }
.fi { font: italic 14px "Liberation Serif", serif; margin-left: 12px; width: 10px; }
.fs { font-size: 13px; text-decoration: underline; margin-left: 11px; width: 14px; }
.r2 .chev { margin-left: 4px; }
.vsep { width: 1px; height: 21px; background: #c9c9c9; margin: 0 6px 0 9px; }
.colorA { font-size: 14px; line-height: 15px; width: 16px; text-align: center; border-bottom: 4px solid #f00; height: 19px; margin-left: 10px; }

.g-align { width: 182px; }
.g-align .gbody { padding-left: 13px; }
.ra1 { height: 23px; margin-top: 9px; }
.ra2 { height: 23px; margin-top: 9px; }
.al { margin-right: 10px; }
.al-t { margin-bottom: 8px; }
.alsel { width: 22px; height: 23px; background: #c6c6c6; border: 1px solid #999; display: flex; align-items: center; justify-content: center; margin-left: -4px; padding-top: 6px; }
.orient { margin-left: 6px; }
.ra1 .chev { margin-left: 2px; }
.ra2 .al:nth-child(3) { margin-right: 11px; }
.ind { margin-right: 9px; }
.vsep.s2 { margin: 0 9px 0 20px; }
.vsep.s3 { margin: 0 7px 0 -1px; }
.ra2 .chev { margin-left: 5px; }
.wrap { display: flex; flex-direction: column; font-size: 11px; line-height: 9px; color: #555; }
.wrap b { font-weight: 400; display: flex; align-items: center; }

.g-num { width: 156px; }
.g-num .gbody { padding-left: 9px; }
.c-num { width: 140px; }
.rn2 { margin-top: 9px; height: 23px; padding-left: 3px; }
.rn2 .chev { margin-left: 5px; }
.pct { font-size: 17px; margin-left: 10px; width: 24px; }
.kilo { font-size: 10.5px; color: #666; width: 18px; }
.vsep.s4 { margin: 0 7px 0 5px; }
.dec { font-size: 10px; line-height: 9px; width: 24px; position: relative; color: #555; }
.dec svg { display: inline-block; }
.dec em { font-style: normal; }

.g-styles { width: 238px; }
.big { display: grid; grid-template-rows: 38px auto; grid-template-columns: minmax(0, 1fr); justify-items: center; text-align: center; line-height: 16px; white-space: nowrap; }
.big > span { grid-row: 2; }
.big .chev { display: inline-block; margin: 0 0 2px 4px; vertical-align: middle; }
.t8 { margin-top: 8px; }
.t5 { margin-top: 5px; }
.b-cond { width: 94px; margin-left: 2px; }
.b-table { width: 72px; }
.b-cell { width: 70px; }

.g-cells { width: 104px; }
.g-cells .gbody { padding-left: 11px; }
.cellrow { height: 23px; display: flex; align-items: center; gap: 3px; }
.cellrow .c1 { margin-left: 4px; }
.cellrow .c2 { margin-left: 6px; }
.cellrow .c3 { margin-left: 0; }

.g-edit { width: 181px; }
.edcol { width: 46px; padding-left: 11px; }
.edrow { height: 23px; display: flex; align-items: center; gap: 5px; }
.edrow:first-child svg:first-child { margin-right: 2px; }
.b-sort { width: 58px; }
.b-find { width: 68px; }
.g-addin { width: 90px; }
.b-add { width: 90px; }
.collapse { position: absolute; right: 2px; top: 83px; }

/* formula bar */
.fxbar { margin-top: 11px; height: 26px; flex: none; display: flex; align-items: stretch; font-size: 12.8px; color: #444; }
.namebox { margin-left: 5px; width: 102px; background: #fff; border: 1px solid #c6c6c6; display: flex; align-items: center; justify-content: space-between; padding: 0 6px; }
.fxdots { width: 2px; height: 11px; margin: 8px 14px 0 14px; border-left: 2px dotted #aaa; }
.fxbtns { width: 110px; background: #fff; border: 1px solid #c6c6c6; display: flex; align-items: center; justify-content: space-between; padding: 0 12px 0 13px; }
.fx { font: italic 700 13px "Liberation Serif", serif; color: #666; }
.fx sub { font-size: 9px; }
.fxinput { position: relative; flex: 1; margin-left: 3px; background: #fff; border: 1px solid #c6c6c6; border-right: 0; display: flex; align-items: center; padding-left: 11px; }
.fxexp { position: absolute; right: 3px; top: 8px; }

/* sheet */
.sheet { margin-top: 10px; height: 471px; flex: none; display: flex; overflow: hidden; }
.gridwrap { width: 1345px; flex: none; overflow: hidden; border-right: 1px solid #a0a0a0; }
.grid {
  display: grid; width: 1344px;
  grid-template-columns: 22px 102px 93px 135px 279px 195px 318px 67px 130px 3px;
  grid-template-rows: 16px 34px 36px 36px 36px 36px 36px 18px 54px 54px 71px 54px;
  font: 14.15px/18px "Liberation Serif", "Times New Roman", serif; color: #000;
}
.hd { background: #e6e6e6; font: 400 11.5px/15px "Noto Sans", sans-serif; color: #333; text-align: center; border-left: 1px solid #b5b5b5; border-bottom: 1px solid #a5a5a5; }
.hd.corner { border-left: 0; position: relative; }
.corner i { position: absolute; right: 3px; bottom: 2px; width: 0; height: 0; border-left: 8px solid transparent; border-bottom: 8px solid #c4c4c4; }
.hd.cur { background: #d2d2d2; color: #217346; border-bottom: 2px solid #217346; }
.hd.sl { border-left: 1px dashed #999; }
.rh { background: #e6e6e6; font: 400 11.5px/14px "Noto Sans", sans-serif; color: #333; display: flex; align-items: flex-end; justify-content: center; border-bottom: 1px solid #b5b5b5; overflow: hidden; }
.c { display: flex; align-items: flex-end; padding: 0 0 0 2px; border-left: 1px solid #000; border-bottom: 1px solid #000; background: #fff; overflow: hidden; min-width: 0; min-height: 0; }
.c span { margin-bottom: -1px; }
.c.nm { font-weight: 700; }
.c.da, .c.sl {
  border-left-color: transparent;
  background: repeating-linear-gradient(to bottom, #9a9a9a 0 4px, transparent 4px 7px) 0 0 / 1px 100% no-repeat border-box, #fff;
}
.c.brk {
  border-bottom-color: transparent;
  background: repeating-linear-gradient(to right, #9a9a9a 0 4px, transparent 4px 7px) 0 100% / 100% 1px no-repeat border-box, #fff;
}
.c.da.brk, .c.sl.brk {
  background:
    repeating-linear-gradient(to bottom, #9a9a9a 0 4px, transparent 4px 7px) 0 0 / 1px 100% no-repeat border-box,
    repeating-linear-gradient(to right, #9a9a9a 0 4px, transparent 4px 7px) 0 100% / 100% 1px no-repeat border-box,
    #fff;
}
.c.sl { padding: 0; position: relative; }
.c.sl::before, .c.sl::after { content: ""; position: absolute; right: 0; width: 1px; height: 1px; background: #c98a2e; }
.c.sl::before { bottom: 6px; }
.c.sl::after { bottom: 16px; }
.c.clip span { white-space: nowrap; }

.vscroll { width: 15px; flex: none; margin-left: 3px; display: flex; flex-direction: column; background: #f0f0f0; padding-top: 6px; }
.sbtn { height: 14px; background: #fff; border: 1px solid #888; display: flex; align-items: center; justify-content: center; flex: none; }
.vthumb { margin-top: 140px; height: 141px; flex: none; background: #fff; border: 1px solid #aaa; }

/* sheet tabs */
.sheetbar { height: 24px; flex: none; background: #e6e6e6; border-top: 1px solid #a5a5a5; display: flex; align-items: flex-start; }
.navarrows { width: 100px; padding: 8px 0 0 27px; display: flex; gap: 24px; }
.stab { width: 131px; height: 25px; background: #fff; border: 1px solid #a5a5a5; border-top: 0; border-bottom: 3px solid #217346; color: #217346; font: 700 12.6px/24px "Noto Sans", sans-serif; text-align: center; }
.addsheet { margin: 5px 0 0 33px; }
.tabdots { width: 2px; height: 11px; margin: 8px 14px 0 0; border-left: 3px dotted #b5b5b5; }
.hscroll { width: 509px; margin: 6px 13px 0 0; height: 14px; display: flex; background: #f0f0f0; flex: none; }
.hthumb { width: 459px; background: #fff; border: 1px solid #a5a5a5; border-left-width: 2px; }
.hb { width: 15px; height: 14px; }

/* status */
.status { height: 18px; margin-top: 4px; flex: none; background: #f3f2f1; border-top: 1px solid #d0d0d0; display: flex; align-items: flex-start; font-size: 11.2px; line-height: 16px; }
.st-ready { margin-left: 11px; padding-top: 4px; width: 47px; }
.st-macro { margin: 3px 0 0 8px; }
.st-acc { margin: 3px 0 0 16px; }
.st-acct { margin-left: 3px; padding-top: 4px; color: #444; }
.view { width: 40px; height: 17px; display: flex; justify-content: center; padding-top: 3px; }
.view.on { background: #d2d2d2; }
.zm { width: 10px; margin-left: 4px; font-size: 14px; text-align: center; line-height: 14px; padding-top: 3px; flex: none; }
.slider { width: 100px; height: 1px; background: #555; margin: 10px 0 0 5px; position: relative; flex: none; }
.slider i { position: absolute; left: 40px; top: -6px; width: 5px; height: 12px; background: #444; }
.st-pct { margin-left: 12px; padding-top: 4px; width: 21px; flex: none; white-space: nowrap; color: #555; }
```
